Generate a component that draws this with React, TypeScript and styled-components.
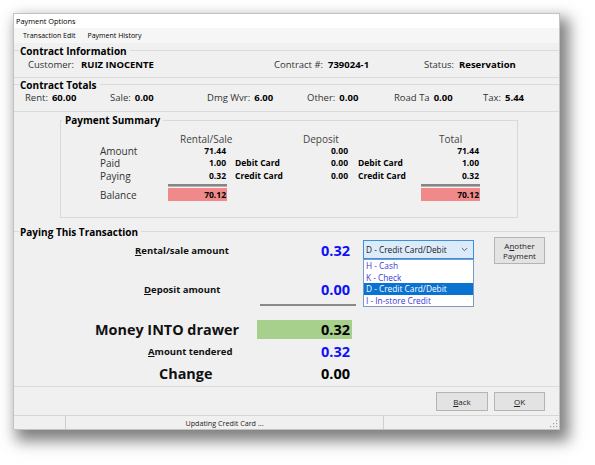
import React from 'react';
import styled, { createGlobalStyle } from 'styled-components';

const Global = createGlobalStyle`
  html, body { margin: 0; padding: 0; background: #ffffff; }
  body { font-family: "Open Sans", "Noto Sans", sans-serif; -webkit-font-smoothing: antialiased; }
  * { box-sizing: border-box; }
`;

const Page = styled.div`
  width: 595px;
  height: 465px;
  padding: 13px 0 0 13px;
  overflow: hidden;
`;

const Window = styled.div`
  width: 547px;
  background: #f0f0f0;
  border: 1px solid #c3c3c3;
  box-shadow: 6px 8px 14px 3px rgba(0, 0, 0, 0.5);
  display: flex;
  flex-direction: column;
  color: #000;
`;

const TitleBar = styled.div`
  height: 14px;
  line-height: 14px;
  background: #ffffff;
  font-size: 7.4px;
  padding-left: 2px;
`;

const MenuBar = styled.div`
  height: 15px;
  background: #f6f6f6;
  display: flex;
  align-items: center;
  gap: 12px;
  padding-left: 9px;
  font-size: 7px;
`;

const Group = styled.div<{ $h: number }>`
  height: ${p => p.$h}px;
  border-bottom: 1px solid #dadada;
  display: flex;
  flex-direction: column;
`;

const GroupTitle = styled.div<{ $h: number }>`
  height: ${p => p.$h}px;
  display: flex;
  align-items: center;
  font-size: 10px;
  line-height: 12px;
  font-weight: 700;
  gap: 1px;
  &::before {
    content: '';
    width: 5px;
    border-top: 1px solid #dadada;
  }
  &::after {
    content: '';
    flex: 1;
    border-top: 1px solid #dadada;
    margin-left: 2px;
  }
`;

const InfoRow = styled.div`
  height: 14px;
  display: grid;
  grid-template-columns: 53px 193px 54px 96px 35px 1fr;
  align-items: center;
  padding-left: 14px;
  font-size: 9.5px;
  line-height: 12px;
  white-space: nowrap;
`;

const TotalsRow = styled.div`
  height: 14px;
  display: grid;
  grid-template-columns: 85px 97px 100px 87px 89px 1fr;
  align-items: center;
  padding-left: 11px;
  font-size: 9.5px;
  line-height: 12px;
  white-space: nowrap;
`;

const Field = styled.span`
  display: flex;
  gap: 4px;
`;

const Lbl = styled.span`
  color: #333;
`;

const Val = styled.span`
  font-weight: 700;
  color: #000;
`;

const Summary = styled.fieldset`
  margin: 2px 0 0 46px;
  padding: 0;
  width: 458px;
  height: 104px;
  border: 1px solid #d8d8d8;
  min-width: 0;
`;

const Legend = styled.legend`
  margin-left: 1px;
  padding: 0 3px;
  font-size: 10px;
  line-height: 12px;
  font-weight: 700;
`;

const SummaryGrid = styled.div`
  display: grid;
  grid-template-columns: 39px 68px 59px 64px 58px 72px 59px;
  grid-template-rows: 12px 12px 12px 13px 6px 13px;
  margin-top: 7px;
  align-items: center;
  white-space: nowrap;
`;

const ColHead = styled.div<{ $col: number; $pad: number }>`
  grid-column: ${p => p.$col};
  grid-row: 1;
  padding-left: ${p => p.$pad}px;
  font-size: 10px;
  line-height: 12px;
  color: #444;
  overflow: visible;
`;

const RowLabel = styled.div<{ $row: number }>`
  grid-column: 2;
  grid-row: ${p => p.$row};
  font-size: 10px;
  line-height: 12px;
  color: #333;
`;

const Num = styled.div<{ $col: number; $row: number; $pink?: boolean }>`
  grid-column: ${p => p.$col};
  grid-row: ${p => p.$row};
  text-align: right;
  padding-right: 1px;
  font-size: 8.5px;
  font-weight: 700;
  line-height: 12px;
  height: ${p => (p.$pink ? 13 : 12)}px;
  padding-top: ${p => (p.$pink ? 1 : 0)}px;
  background: ${p => (p.$pink ? '#f08a8a' : 'transparent')};
`;

const Card = styled.div<{ $col: number; $row: number; $pad: number }>`
  grid-column: ${p => p.$col};
  grid-row: ${p => p.$row};
  padding-left: ${p => p.$pad}px;
  font-size: 8.5px;
  line-height: 12px;
  font-weight: 700;
`;

const SumRule = styled.div<{ $col: number }>`
  grid-column: ${p => p.$col};
  grid-row: 5;
  align-self: start;
  margin-top: 2px;
  height: 3px;
  border-top: 2px solid #858585;
  border-bottom: 1px solid #b4b4b4;
`;

const Paying = styled.div`
  margin-top: 7px;
  display: flex;
  flex-direction: column;
`;

const TxRow = styled.div<{ $h: number; $mt: number }>`
  height: ${p => p.$h}px;
  margin-top: ${p => p.$mt}px;
  display: grid;
  grid-template-columns: 243px 95px 11px 111px 20px 51px;
  align-items: center;
  white-space: nowrap;
`;

const TxLabel = styled.div<{ $indent: number; $big?: boolean }>`
  grid-column: 1;
  padding-left: ${p => p.$indent}px;
  font-size: ${p => (p.$big ? 14.4 : 9.5)}px;
  line-height: ${p => (p.$big ? 18 : 12)}px;
  font-weight: 700;
  color: #111;
`;

const TxValue = styled.div<{ $blue?: boolean; $green?: boolean; $size: number }>`
  grid-column: 2;
  align-self: stretch;
  display: flex;
  align-items: center;
  justify-content: flex-end;
  padding-right: 2px;
  font-size: ${p => p.$size}px;
  line-height: 18px;
  font-weight: 700;
  color: ${p => (p.$blue ? '#1010f5' : '#000')};
  background: ${p => (p.$green ? '#a8d08d' : 'transparent')};
`;

const U = styled.span`
  text-decoration: underline;
  text-underline-offset: 1px;
`;

const SelectWrap = styled.div`
  grid-column: 4;
  align-self: start;
  margin-top: 2px;
  position: relative;
`;

const SelectBox = styled.div`
  height: 19px;
  border: 1px solid #3c8ee0;
  background: #dcebfa;
  display: flex;
  align-items: center;
  justify-content: space-between;
  padding: 0 5px 0 2px;
  font-size: 8.3px;
  color: #1a1a1a;
`;

const DropList = styled.div`
  position: absolute;
  top: 19px;
  left: 0;
  width: 111px;
  background: #ffffff;
  border: 1px solid #7a9bc4;
  z-index: 2;
`;

const DropItem = styled.div<{ $selected?: boolean }>`
  height: 11.5px;
  line-height: 11.5px;
  padding-left: 2px;
  font-size: 8.3px;
  color: ${p => (p.$selected ? '#ffffff' : '#3b36d8')};
  background: ${p => (p.$selected ? '#0a72d0' : 'transparent')};
`;

const Button = styled.div<{ $w: number; $h: number }>`
  width: ${p => p.$w}px;
  height: ${p => p.$h}px;
  background: #e3e3e3;
  border: 1px solid #b4b4b4;
  display: flex;
  flex-direction: column;
  align-items: center;
  justify-content: center;
  font-size: 8px;
  line-height: 10px;
  color: #222;
`;

const SideButton = styled(Button)`
  grid-column: 6;
  align-self: start;
  margin-top: -1px;
`;

const TxRule = styled.div`
  margin: 4px 0 0 246px;
  width: 96px;
  height: 2px;
  background: #8a8a8a;
`;

const Footer = styled.div`
  margin-top: 2px;
  border-top: 1px solid #dcdcdc;
  padding: 5px 14px 0 0;
  display: flex;
  justify-content: flex-end;
  gap: 6px;
`;

const StatusBar = styled.div`
  margin-top: 4px;
  height: 14px;
  border-top: 1px solid #d6d6d6;
  display: flex;
  align-items: stretch;
`;

const StatusPanel = styled.div`
  margin-left: 51px;
  width: 319px;
  border-left: 1px solid #cfcfcf;
  border-right: 1px solid #cfcfcf;
  display: flex;
  align-items: center;
  justify-content: center;
  font-size: 7.2px;
  color: #222;
`;

const Grip = styled.svg`
  margin-left: auto;
  align-self: flex-end;
  margin-right: 1px;
  margin-bottom: 1px;
`;

const Chevron = () => (
  <svg width="7" height="5" viewBox="0 0 7 5">
    <path d="M0.8 1 L3.5 3.7 L6.2 1" fill="none" stroke="#555" strokeWidth="0.9" />
  </svg>
);

export default function App() {
  return (
    <>
      <Global />
      <Page>
        <Window>
          <TitleBar>Payment Options</TitleBar>
          <MenuBar>
            <span>Transaction Edit</span>
            <span>Payment History</span>
          </MenuBar>

          <Group $h={35}>
            <GroupTitle $h={15}>Contract Information</GroupTitle>
            <InfoRow>
              <Lbl>Customer:</Lbl>
              <Val>RUIZ INOCENTE</Val>
              <Lbl>Contract #:</Lbl>
              <Val>739024-1</Val>
              <Lbl>Status:</Lbl>
              <Val>Reservation</Val>
            </InfoRow>
          </Group>

          <Group $h={34}>
            <GroupTitle $h={13}>Contract Totals</GroupTitle>
            <TotalsRow>
              <Field><Lbl>Rent:</Lbl><Val>60.00</Val></Field>
              <Field><Lbl>Sale:</Lbl><Val>0.00</Val></Field>
              <Field><Lbl>Dmg Wvr:</Lbl><Val>6.00</Val></Field>
              <Field><Lbl>Other:</Lbl><Val>0.00</Val></Field>
              <Field><Lbl>Road Ta</Lbl><Val>0.00</Val></Field>
              <Field><Lbl>Tax:</Lbl><Val>5.44</Val></Field>
            </TotalsRow>
          </Group>

          <Summary>
            <Legend>Payment Summary</Legend>
            <SummaryGrid>
              <ColHead $col={3} $pad={12}>Rental/Sale</ColHead>
              <ColHead $col={5} $pad={12}>Deposit</ColHead>
              <ColHead $col={7} $pad={18}>Total</ColHead>

              <RowLabel $row={2}>Amount</RowLabel>
              <Num $col={3} $row={2}>71.44</Num>
              <Num $col={5} $row={2}>0.00</Num>
              <Num $col={7} $row={2}>71.44</Num>

              <RowLabel $row={3}>Paid</RowLabel>
              <Num $col={3} $row={3}>1.00</Num>
              <Card $col={4} $row={3} $pad={8}>Debit Card</Card>
              <Num $col={5} $row={3}>0.00</Num>
              <Card $col={6} $row={3} $pad={9}>Debit Card</Card>
              <Num $col={7} $row={3}>1.00</Num>

              <RowLabel $row={4}>Paying</RowLabel>
              <Num $col={3} $row={4}>0.32</Num>
              <Card $col={4} $row={4} $pad={8}>Credit Card</Card>
              <Num $col={5} $row={4}>0.00</Num>
              <Card $col={6} $row={4} $pad={9}>Credit Card</Card>
              <Num $col={7} $row={4}>0.32</Num>

              <SumRule $col={3} />
              <SumRule $col={7} />

              <RowLabel $row={6}>Balance</RowLabel>
              <Num $col={3} $row={6} $pink>70.12</Num>
              <Num $col={7} $row={6} $pink>70.12</Num>
            </SummaryGrid>
          </Summary>

          <Paying>
            <GroupTitle $h={13}>Paying This Transaction</GroupTitle>

            <TxRow $h={26} $mt={0}>
              <TxLabel $indent={121}><U>R</U>ental/sale amount</TxLabel>
              <TxValue $blue $size={14.5}>0.32</TxValue>
              <SelectWrap>
                <SelectBox>
                  <span>D - Credit Card/Debit</span>
                  <Chevron />
                </SelectBox>
                <DropList>
                  <DropItem>H - Cash</DropItem>
                  <DropItem>K - Check</DropItem>
                  <DropItem $selected>D - Credit Card/Debit</DropItem>
                  <DropItem>I - In-store Credit</DropItem>
                </DropList>
              </SelectWrap>
              <SideButton $w={51} $h={27}>
                <span>A<U>n</U>other</span>
                <span>Payment</span>
              </SideButton>
            </TxRow>

            <TxRow $h={20} $mt={16}>
              <TxLabel $indent={130}><U>D</U>eposit amount</TxLabel>
              <TxValue $blue $size={14.5}>0.00</TxValue>
            </TxRow>

            <TxRule />

            <TxRow $h={19} $mt={14}>
              <TxLabel $indent={81} $big>Money INTO drawer</TxLabel>
              <TxValue $green $size={14.5}>0.32</TxValue>
            </TxRow>

            <TxRow $h={20} $mt={3}>
              <TxLabel $indent={134}><U>A</U>mount tendered</TxLabel>
              <TxValue $blue $size={14.5}>0.32</TxValue>
            </TxRow>

            <TxRow $h={20} $mt={2}>
              <TxLabel $indent={145} $big>Change</TxLabel>
              <TxValue $size={14.5}>0.00</TxValue>
            </TxRow>
          </Paying>

          <Footer>
            <Button $w={52} $h={19}><span><U>B</U>ack</span></Button>
            <Button $w={51} $h={19}><span><U>O</U>K</span></Button>
          </Footer>

          <StatusBar>
            <StatusPanel>Updating Credit Card ...</StatusPanel>
            <Grip width="8" height="8" viewBox="0 0 8 8">
              <rect x="6" y="0" width="1.2" height="1.2" fill="#a0a0a0" />
              <rect x="3" y="3" width="1.2" height="1.2" fill="#a0a0a0" />
              <rect x="6" y="3" width="1.2" height="1.2" fill="#a0a0a0" />
              <rect x="0" y="6" width="1.2" height="1.2" fill="#a0a0a0" />
              <rect x="3" y="6" width="1.2" height="1.2" fill="#a0a0a0" />
              <rect x="6" y="6" width="1.2" height="1.2" fill="#a0a0a0" />
            </Grip>
          </StatusBar>
        </Window>
      </Page>
    </>
  );
}
